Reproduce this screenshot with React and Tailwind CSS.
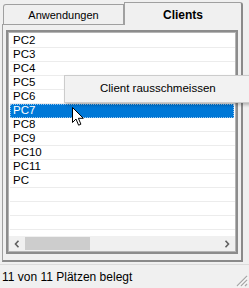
const clients = ["PC2", "PC3", "PC4", "PC5", "PC6", "PC7", "PC8", "PC9", "PC10", "PC11", "PC", "", "", "", ""];

function Cursor() {
  return (
    <svg
      width="13"
      height="20"
      viewBox="0 0 13 20"
      className="absolute left-[72px] top-[107px] z-30"
    >
      <path
        d="M0.5 0.5 L0.5 15.5 L4 12 L6.6 18.2 L8.9 17.2 L6.4 11.3 L11.3 11.3 Z"
        fill="#ffffff"
        stroke="#000000"
        strokeWidth="1"
        strokeLinejoin="miter"
      />
    </svg>
  );
}

function SizeGrip() {
  return (
    <svg width="12" height="12" viewBox="0 0 12 12" className="absolute right-[1px] bottom-[1px]">
      <path d="M11 1 L1 11 M11 5 L5 11 M11 9 L9 11" stroke="#a8a8a8" strokeWidth="1.2" />
      <path d="M11.8 1.8 L1.8 11.8 M11.8 5.8 L5.8 11.8" stroke="#ffffff" strokeWidth="0.8" />
    </svg>
  );
}

export default function App() {
  return (
    <div
      className="relative w-[249px] h-[288px] bg-[#f0f0f0] overflow-hidden flex flex-col text-black"
      style={{ fontFamily: '"Liberation Sans", Arial, sans-serif' }}
    >
      {/* tab strip */}
      <div className="h-[24px] flex items-end pl-[3px] relative z-10">
        <div className="w-[121px] h-[20px] border-l border-t border-r border-[#a0a0a0] rounded-tl-[3px] bg-[#f0f0f0] flex items-center justify-center pt-[2px] text-[11px]">
          Anwendungen
        </div>
        <div className="w-[119px] h-[23px] -mb-px border-t border-l border-[#a0a0a0] border-r-2 border-r-[#8a8a8a] rounded-tr-[3px] bg-[#f0f0f0] flex items-center justify-center pt-[1px] text-[12px] font-bold">
          Clients
        </div>
      </div>

      {/* panel */}
      <div className="ml-[2px] w-[241px] h-[238px] border-l border-t border-[#a0a0a0] border-r-2 border-b-2 border-r-[#8a8a8a] border-b-[#8a8a8a] pl-[3px] pt-[5px]">
        <div className="w-[232px] h-[224px] border-2 border-[#8c8c8c] bg-white">
          <div className="h-full border border-[#b4b4b4] flex flex-col">
            <div className="flex-1 overflow-hidden pt-[1px]">
              {clients.map((name, i) => {
                const selected = name === "PC7";
                return (
                  <div
                    key={i}
                    className={
                      selected
                        ? "h-[14px] flex items-center pl-[3px] ml-[1px] mr-[1px] bg-[#0078d7] text-white text-[11.5px] leading-none outline outline-1 outline-dotted outline-[#9cc5ea] -outline-offset-1"
                        : "h-[14px] flex items-center pl-[3px] ml-[1px] border-b border-[#ececec] text-[11.5px] leading-none"
                    }
                  >
                    {name}
                  </div>
                );
              })}
            </div>
            {/* horizontal scrollbar */}
            <div className="h-[15px] bg-[#f0f0f0] flex items-center">
              <div className="w-[16px] h-full flex items-center justify-center">
                <svg width="6" height="8" viewBox="0 0 6 8">
                  <path d="M4.5 0.8 L1.5 4 L4.5 7.2" fill="none" stroke="#606060" strokeWidth="1.6" />
                </svg>
              </div>
              <div className="w-[65px] h-[13px] bg-[#cdcdcd]" />
              <div className="flex-1" />
              <div className="w-[16px] h-full flex items-center justify-center">
                <svg width="6" height="8" viewBox="0 0 6 8">
                  <path d="M1.5 0.8 L4.5 4 L1.5 7.2" fill="none" stroke="#606060" strokeWidth="1.6" />
                </svg>
              </div>
            </div>
          </div>
        </div>
      </div>

      {/* status bar */}
      <div className="relative mt-[2px] flex-1 border-t border-[#dcdcdc] flex items-center pl-[2px] pt-[1px] text-[12px]">
        11 von 11 Plätzen belegt
        <SizeGrip />
      </div>

      {/* context menu */}
      <div className="absolute left-[64px] top-[75px] w-[200px] h-[28px] bg-[#f2f2f2] border border-[#cccccc] shadow-[2px_2px_3px_rgba(0,0,0,0.25)] z-20 flex items-center pl-[35px] text-[11.5px]">
        Client rausschmeissen
      </div>

      <Cursor />
    </div>
  );
}
